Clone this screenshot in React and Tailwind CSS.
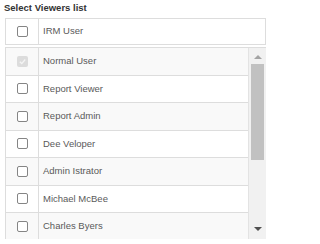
import React from 'react'

const users = [
  { name: 'Normal User', checked: true, disabled: true },
  { name: 'Report Viewer' },
  { name: 'Report Admin' },
  { name: 'Dee Veloper' },
  { name: 'Admin Istrator' },
  { name: 'Michael McBee' },
  { name: 'Charles Byers' },
]

function Check({ disabled }) {
  if (disabled) {
    return (
      <span className="flex h-[11px] w-[11px] items-center justify-center rounded-[2px] bg-[#dcdcdc]">
        <svg viewBox="0 0 10 10" className="h-[9px] w-[9px]">
          <path d="M2 5.2 L4.2 7.3 L8 2.8" fill="none" stroke="#f4f4f4" strokeWidth="1.5" />
        </svg>
      </span>
    )
  }
  return <span className="block h-[11px] w-[11px] rounded-[2px] border border-[#858585] bg-white" />
}

export default function App() {
  return (
    <div className="h-[244px] w-[269px] bg-white font-['Liberation_Sans',Arial,sans-serif] text-[9.5px] text-[#5a5a5a]">
      <div className="h-[18px] pl-[4px] pt-[2px] text-[9.5px] font-bold leading-[12px] text-[#333]">Select Viewers list</div>
      <div className="ml-[5px] w-[261px]">
        <div className="flex h-[27px] border border-[#ddd] bg-white">
          <div className="flex w-[33px] items-center justify-center border-r border-[#ddd]">
            <Check />
          </div>
          <div className="flex items-center pl-[4px]">IRM User</div>
        </div>
        <div className="mt-[2px] flex h-[192px] overflow-hidden border-t border-l border-[#ddd]">
          <div className="flex-1">
            {users.map((u, i) => (
              <div
                key={u.name}
                className={`flex h-[27.5px] border-b border-[#ddd] ${i % 2 === 0 ? 'bg-[#f9f9f9]' : 'bg-white'}`}
              >
                <div className="flex w-[33px] items-center justify-center border-r border-[#ddd]">
                  <Check disabled={u.disabled} />
                </div>
                <div className="flex items-center pl-[4px]">{u.name}</div>
              </div>
            ))}
          </div>
          <div className="flex w-[18px] flex-col items-center border-l border-[#e3e3e3] bg-[#f1f1f1]">
            <div className="flex h-[16px] w-full items-center justify-center pt-[2px]">
              <svg viewBox="0 0 8 4" className="h-[4px] w-[8px]">
                <path d="M0 4 L4 0 L8 4 Z" fill="#a3a3a3" />
              </svg>
            </div>
            <div className="h-[96px] w-[13px] bg-[#c1c1c1]" />
            <div className="flex-1" />
            <div className="flex h-[16px] w-full items-center justify-center pb-[4px]">
              <svg viewBox="0 0 8 4" className="h-[4px] w-[8px]">
                <path d="M0 0 L8 0 L4 4 Z" fill="#505050" />
              </svg>
            </div>
          </div>
        </div>
      </div>
    </div>
  )
}
